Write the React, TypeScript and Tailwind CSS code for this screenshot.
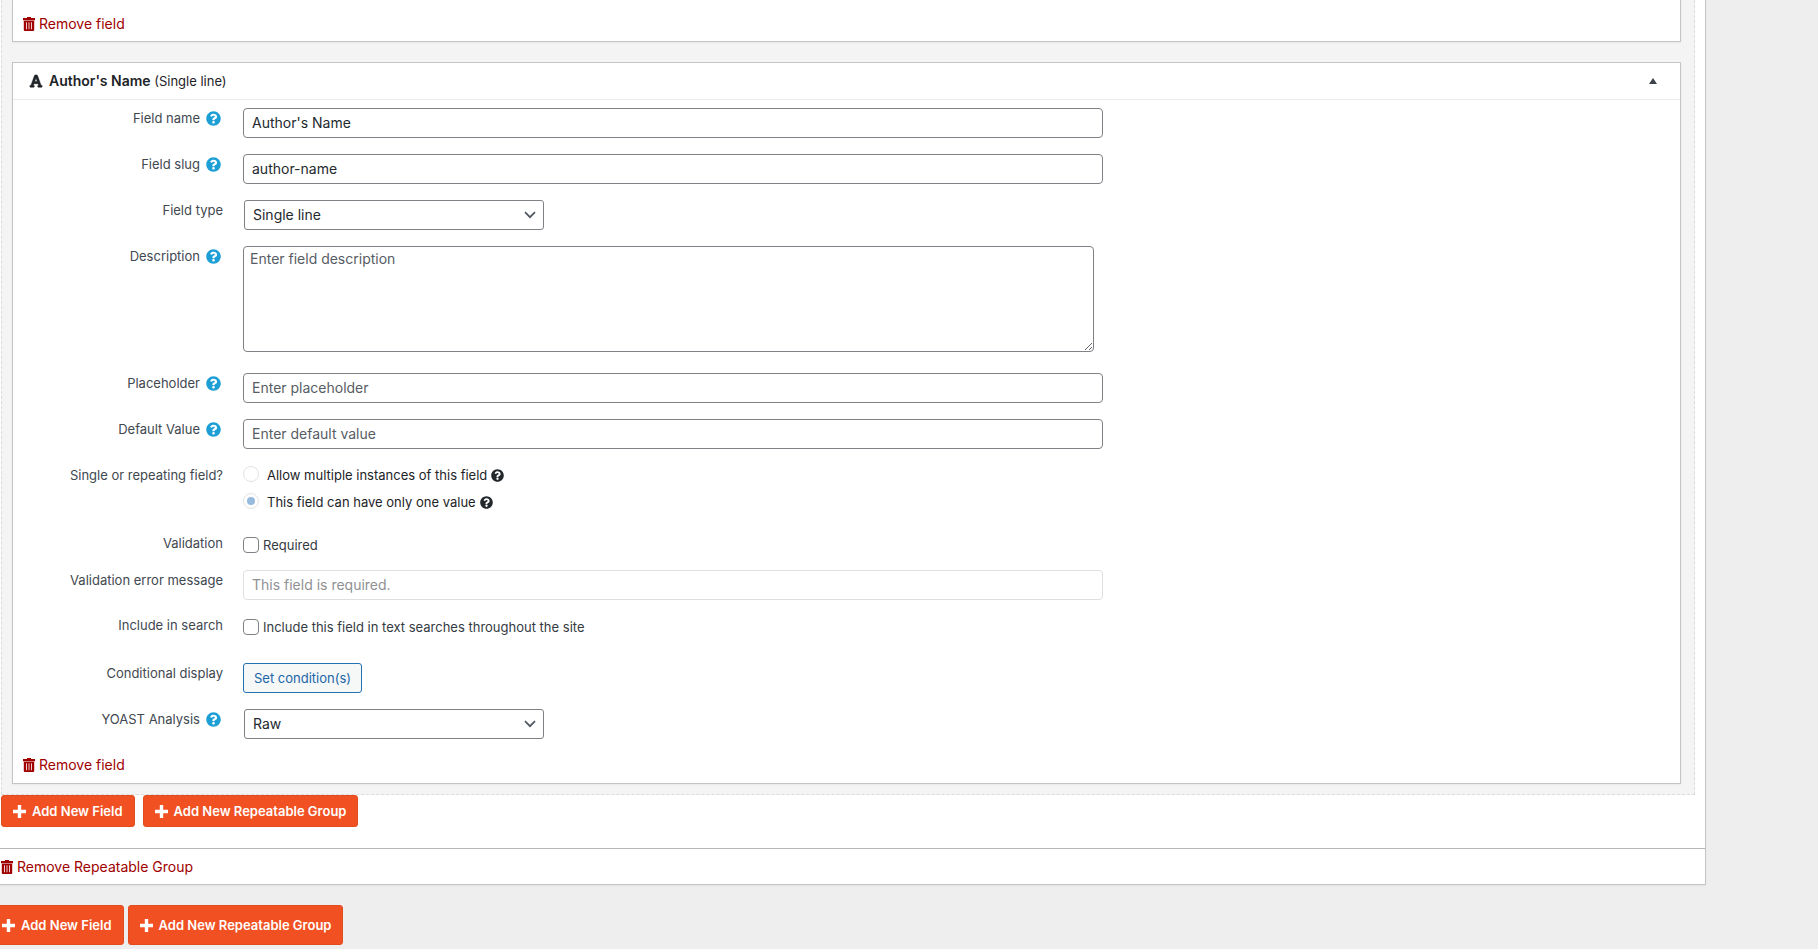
import type { ReactNode } from "react";
import { FaFont, FaQuestionCircle } from "react-icons/fa";

const inputClass =
  "block h-[30px] w-full rounded-[4px] border border-[#7e8185] bg-white px-2 pb-0.5 text-sm text-[#23292e] placeholder:text-[#575d64] placeholder:opacity-100 disabled:border-[#dedfe1] disabled:placeholder:text-[#8f9193]";

function TrashIcon() {
  return (
    <svg width="12" height="14" viewBox="0 0 12 14" fill="none" aria-hidden="true" className="shrink-0">
      <path
        fill="currentColor"
        fillRule="evenodd"
        d="M4 0h4v1h4v2.2H0V1h4zM.8 3.8h10.4V13a1 1 0 0 1-1 1H1.8a1 1 0 0 1-1-1zM3.1 5.2v7h.8v-7zM5.6 5.2v7h.8v-7zM8.1 5.2v7h.8v-7z"
      />
    </svg>
  );
}

function PlusIcon() {
  return (
    <svg width="13" height="13" viewBox="0 0 13 13" aria-hidden="true" className="mb-0.5 shrink-0">
      <path fill="currentColor" d="M4.8 0h3.4v4.8H13v3.4H8.2V13H4.8V8.2H0V4.8h4.8z" />
    </svg>
  );
}

function RemoveLink({ children }: { children: ReactNode }) {
  return (
    <a href="#remove" className="inline-flex items-center gap-1 text-sm leading-5 text-[#a00000]">
      <TrashIcon />
      {children}
    </a>
  );
}

function AddButton({ children, large }: { children: ReactNode; large?: boolean }) {
  return (
    <button
      type="button"
      className={
        "flex items-center gap-1.5 rounded-[3px] border border-[#e34c1f] bg-[#f05022] px-[11px] pt-0.5 text-[13px] font-semibold text-white " +
        (large ? "h-10" : "h-8")
      }
    >
      <PlusIcon />
      {children}
    </button>
  );
}

function Row({
  label,
  htmlFor,
  help,
  className = "mb-4",
  children,
}: {
  label: string;
  htmlFor?: string;
  help?: boolean;
  className?: string;
  children: ReactNode;
}) {
  return (
    <div className={"flex gap-5 " + className}>
      <div className="flex h-5 w-[210px] shrink-0 items-center justify-end gap-1.5 text-[13px] leading-5 text-[#41484f]">
        {htmlFor ? <label htmlFor={htmlFor}>{label}</label> : <span>{label}</span>}
        {help && <FaQuestionCircle size={15} className="mr-0.5 text-[#1d9fd6]" />}
      </div>
      <div className="min-w-0 max-w-[860px] flex-1">{children}</div>
    </div>
  );
}

function Select({ id, options }: { id: string; options: string[] }) {
  return (
    <div className="relative ml-px w-[300px]">
      <select
        id={id}
        className="block h-[30px] w-full appearance-none rounded-[3px] border border-[#7e8185] bg-white pr-6 pl-2 text-sm text-[#23292e]"
      >
        {options.map((option) => (
          <option key={option}>{option}</option>
        ))}
      </select>
      <svg
        width="12"
        height="8"
        viewBox="0 0 12 8"
        aria-hidden="true"
        className="pointer-events-none absolute top-[11px] right-2 text-[#50575e]"
      >
        <path d="M1 1.2l5 5 5-5" fill="none" stroke="currentColor" strokeWidth="1.7" />
      </svg>
    </div>
  );
}

function RadioOption({ id, label, checked }: { id: string; label: string; checked?: boolean }) {
  return (
    <div className="mb-[7px] flex h-5 items-center gap-2">
      <input
        id={id}
        type="radio"
        name="repetition"
        disabled
        defaultChecked={checked}
        className="mb-[3px] grid size-4 shrink-0 appearance-none place-items-center rounded-full border border-[#e2e3e4] bg-white before:size-2 before:rounded-full checked:before:bg-[#97badf]"
      />
      <label htmlFor={id} className="text-[13px] leading-5 text-[#1d2327]">
        {label}
      </label>
      <FaQuestionCircle size={13} className="-ml-1 text-[#23282d]" />
    </div>
  );
}

function CheckOption({ id, label }: { id: string; label: string }) {
  return (
    <div className="flex h-6 items-center gap-1">
      <input
        id={id}
        type="checkbox"
        className="size-4 shrink-0 appearance-none rounded-[4px] border border-[#7e8185] bg-white checked:bg-[#2271b1]"
      />
      <label htmlFor={id} className="text-[13px] leading-5 text-[#343b42]">
        {label}
      </label>
    </div>
  );
}

export default function App() {
  return (
    <div className="min-h-screen bg-[#eeeeee] font-['Inter',sans-serif] text-[#1d2327]">
      <main className="mr-28">
        <div className="border-r border-b border-[#c3c4c7] bg-white shadow-xs">
          <div className="mr-2.5 ml-px border border-t-0 border-dashed border-[#dcdcde] bg-[#f4f4f4] pr-[13px] pb-2.5 pl-2.5">
            <section className="border border-t-0 border-[#c3c4c7] bg-white px-2.5 pt-3.5 pb-1.5 shadow-xs">
              <div className="flex h-[21px] items-start">
                <RemoveLink>Remove field</RemoveLink>
              </div>
            </section>

            <section className="mt-5 border border-[#c3c4c7] bg-white shadow-xs">
              <header className="flex h-[37px] items-center border-b border-[#ececed] pr-[22px] pl-4">
                <FaFont size={14} stroke="currentColor" strokeWidth={20} className="mr-1.5" />
                <h2 className="text-sm font-semibold">
                  Author's Name <span className="text-[13px] font-normal">(Single line)</span>
                </h2>
                <button type="button" aria-label="Collapse field" className="ml-auto text-[#3c434a]">
                  <svg width="10" height="6" viewBox="0 0 10 6" aria-hidden="true">
                    <path d="M5 0l4 6H1z" fill="currentColor" />
                  </svg>
                </button>
              </header>

              <form className="pt-2">
                <Row label="Field name" htmlFor="name" help>
                  <input id="name" type="text" defaultValue="Author's Name" className={inputClass} />
                </Row>
                <Row label="Field slug" htmlFor="slug" help>
                  <input id="slug" type="text" defaultValue="author-name" className={inputClass} />
                </Row>
                <Row label="Field type" htmlFor="type">
                  <Select id="type" options={["Single line", "Multiple lines"]} />
                </Row>
                <Row label="Description" htmlFor="description" help className="mb-[21px]">
                  <textarea
                    id="description"
                    placeholder="Enter field description"
                    className="block h-[106px] w-[99%] resize rounded-[4px] border border-[#7e8185] bg-white px-1.5 py-0.5 text-sm text-[#23292e] placeholder:text-[#575d64] placeholder:opacity-100"
                  />
                </Row>
                <Row label="Placeholder" htmlFor="placeholder" help>
                  <input id="placeholder" type="text" placeholder="Enter placeholder" className={inputClass} />
                </Row>
                <Row label="Default Value" htmlFor="default" help>
                  <input id="default" type="text" placeholder="Enter default value" className={inputClass} />
                </Row>
                <Row label="Single or repeating field?" className="mb-3.5">
                  <RadioOption id="multiple" label="Allow multiple instances of this field" />
                  <RadioOption id="single" label="This field can have only one value" checked />
                </Row>
                <Row label="Validation" className="mb-[13px]">
                  <CheckOption id="required" label="Required" />
                </Row>
                <Row label="Validation error message" htmlFor="message" className="mb-[15px]">
                  <input id="message" type="text" disabled placeholder="This field is required." className={inputClass} />
                </Row>
                <Row label="Include in search" className="mb-6">
                  <CheckOption id="search" label="Include this field in text searches throughout the site" />
                </Row>
                <Row label="Conditional display">
                  <button
                    type="button"
                    className="block h-[30px] rounded-[3px] border border-[#2271b1] bg-[#f6f7f7] px-2.5 pt-px text-[13px] text-[#1a66a8]"
                  >
                    Set condition(s)
                  </button>
                </Row>
                <Row label="YOAST Analysis" htmlFor="yoast" help>
                  <Select id="yoast" options={["Raw", "None"]} />
                </Row>
                <div className="flex h-7 items-start px-2.5">
                  <RemoveLink>Remove field</RemoveLink>
                </div>
              </form>
            </section>
          </div>

          <div className="flex gap-2 pb-[21px] pl-px">
            <AddButton>Add New Field</AddButton>
            <AddButton>Add New Repeatable Group</AddButton>
          </div>
          <div className="flex h-9 items-center border-t border-[#b5b6b8] pl-px">
            <RemoveLink>Remove Repeatable Group</RemoveLink>
          </div>
        </div>

        <div className="-ml-2.5 flex gap-1 pt-5">
          <AddButton large>Add New Field</AddButton>
          <AddButton large>Add New Repeatable Group</AddButton>
        </div>
      </main>
    </div>
  );
}
